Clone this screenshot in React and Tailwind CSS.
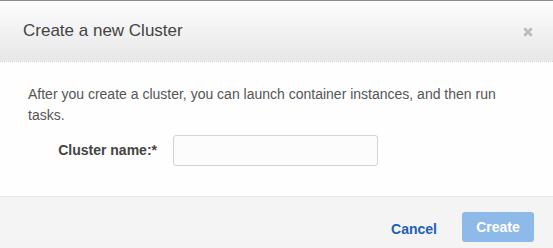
export default function App() {
  return (
    <div className="w-[553px] h-[248px] overflow-hidden flex flex-col border-t border-[#8c8c8c] bg-[#fdfefd]" style={{ fontFamily: '"Liberation Sans", Arial, sans-serif' }}>
      <div className="h-[61px] shrink-0 flex items-center justify-between pl-[23px] pr-[20px] bg-gradient-to-b from-[#fdfdfd] to-[#e7e7e7] border-b border-dotted border-[#d8d8d8]">
        <h1 className="text-[17px] text-[#444] font-normal">Create a new Cluster</h1>
        <svg width="10" height="10" viewBox="0 0 10 10" className="mt-[2px]">
          <path d="M1.3 1.3 L8.7 8.7 M8.7 1.3 L1.3 8.7" stroke="#bdbdbd" strokeWidth="2.8" strokeLinecap="butt" />
        </svg>
      </div>
      <div className="flex-1 px-[28px] pt-[22px] bg-[#fdfefd]">
        <p className="text-[14px] leading-[21px] text-[#555]">
          After you create a cluster, you can launch container instances, and then run tasks.
        </p>
        <div className="flex items-center mt-[9px]">
          <label className="w-[129px] text-right text-[14px] font-bold text-[#444]">Cluster name:*</label>
          <input className="ml-[16px] w-[205px] h-[31px] border border-[#d4d2d8] rounded-[3px] bg-[#fcfcfc] outline-none" />
        </div>
      </div>
      <div className="h-[52px] shrink-0 border-t border-[#e4e5e4] bg-[#f3f4f3] flex items-start justify-end pt-[15px] pr-[19px]">
        <button className="mt-[7px] text-[14px] font-bold text-[#2160b3]">Cancel</button>
        <button className="ml-[25px] w-[72px] h-[30px] rounded-[3px] bg-[#8dbae8] text-white text-[14px] font-bold">Create</button>
      </div>
    </div>
  );
}
